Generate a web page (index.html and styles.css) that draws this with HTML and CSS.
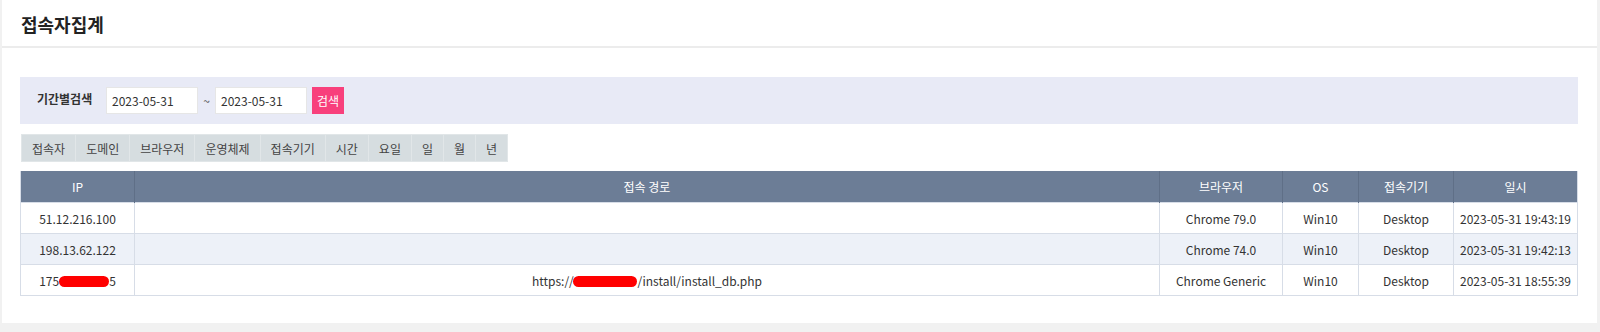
FILE: index.html
```html
<!DOCTYPE html>
<html>
<head>
    <title>접속자집계</title>
    <link rel="stylesheet" href="styles.css">
</head>
<body>
    <div class="panel">
        <div class="panel-head">
            <h1>접속자집계</h1>
        </div>
        <div class="panel-body">
            <form class="search-box">
                <span class="search-label">기간별검색</span>
                <input type="text" class="date-input" value="2023-05-31">
                <span class="tilde">~</span>
                <input type="text" class="date-input" value="2023-05-31">
                <button type="button" class="btn-search">검색</button>
            </form>

            <ul class="tabs">
                <li>접속자</li>
                <li>도메인</li>
                <li>브라우저</li>
                <li>운영체제</li>
                <li>접속기기</li>
                <li>시간</li>
                <li>요일</li>
                <li>일</li>
                <li>월</li>
                <li>년</li>
            </ul>

            <table class="visit-table">
                <thead>
                    <tr>
                        <th class="col-ip">IP</th>
                        <th>접속 경로</th>
                        <th class="col-browser">브라우저</th>
                        <th class="col-os">OS</th>
                        <th class="col-device">접속기기</th>
                        <th class="col-date">일시</th>
                    </tr>
                </thead>
                <tbody>
                    <tr>
                        <td>51.12.216.100</td>
                        <td></td>
                        <td>Chrome 79.0</td>
                        <td>Win10</td>
                        <td>Desktop</td>
                        <td>2023-05-31 19:43:19</td>
                    </tr>
                    <tr>
                        <td>198.13.62.122</td>
                        <td></td>
                        <td>Chrome 74.0</td>
                        <td>Win10</td>
                        <td>Desktop</td>
                        <td>2023-05-31 19:42:13</td>
                    </tr>
                    <tr>
                        <td><span class="masked">175<span class="redact r-ip">.000.00.0</span>5</span></td>
                        <td><span class="masked">https://<span class="redact r-url">example.co</span>/install/install_db.php</span></td>
                        <td>Chrome Generic</td>
                        <td>Win10</td>
                        <td>Desktop</td>
                        <td>2023-05-31 18:55:39</td>
                    </tr>
                </tbody>
            </table>
        </div>
    </div>
</body>
</html>
```

FILE: styles.css
```css
html, body {
    margin: 0;
    height: 100%;
}

body {
    background-color: #f1f1f1;
    font-family: "Noto Sans CJK KR", sans-serif;
    font-size: 12px;
    color: #333;
    padding: 0 3px 9px 2px;
    box-sizing: border-box;
}

.panel {
    background-color: #fff;
    height: 100%;
}

.panel-head {
    height: 46px;
    border-bottom: 2px solid #ececec;
    padding-left: 19px;
    display: flex;
    align-items: center;
}

.panel-head h1 {
    margin: 0;
    font-size: 18px;
    font-weight: bold;
    color: #222;
    padding-top: 2px;
}

.panel-body {
    padding: 29px 19px 0 18px;
}

/* search */
.search-box {
    margin: 0;
    height: 47px;
    background-color: #e8eaf6;
    display: flex;
    align-items: center;
    padding-left: 17px;
}

.search-label {
    font-weight: bold;
    color: #333;
    width: 69px;
    margin-top: -4px;
}

.date-input {
    width: 92px;
    height: 27px;
    box-sizing: border-box;
    border: 1px solid #e6e6e6;
    background: #fff;
    padding: 0 5px;
    font-family: "Noto Sans CJK KR", sans-serif;
    font-size: 12px;
    color: #333;
    outline: none;
}

.tilde {
    width: 17px;
    text-align: center;
    color: #555;
}

.btn-search {
    margin-left: 5px;
    width: 32px;
    height: 27px;
    border: none;
    padding: 0;
    background-color: #f8407c;
    color: #fff;
    font-family: "Noto Sans CJK KR", sans-serif;
    font-size: 12px;
}

/* tabs */
.tabs {
    list-style: none;
    margin: 10px 0 0 1px;
    padding: 0;
    display: flex;
    height: 26px;
    border: 1px solid #e1e6e8;
    border-right: none;
    width: max-content;
}

.tabs li {
    background-color: #d6dde0;
    border-right: 1px solid #e1e6e8;
    color: #444;
    display: flex;
    align-items: center;
    padding: 0 10px;
}

/* table */
.visit-table {
    margin-top: 9px;
    width: 100%;
    border-collapse: collapse;
    text-align: center;
}

.visit-table th {
    background-color: #6c7d96;
    color: #fff;
    font-weight: normal;
    height: 31px;
    padding: 0;
    border: 1px solid #d7dde7;
    border-top: none;
    border-left-color: #5f6f87;
    border-right-color: #5f6f87;
    border-bottom: none;
}

.visit-table th:first-child {
    border-left-color: #d7dde7;
}

.visit-table th:last-child {
    border-right-color: #d7dde7;
}

.visit-table td {
    height: 30px;
    padding: 0;
    border: 1px solid #d7dde7;
    color: #333;
}

.visit-table tbody tr:nth-child(even) {
    background-color: #edf1f8;
}

.col-ip { width: 113px; }
.col-browser { width: 122px; }
.col-os { width: 75px; }
.col-device { width: 94px; }
.col-date { width: 123px; }

/* redacted parts */
.masked {
    position: relative;
}

.redact {
    color: transparent;
    position: relative;
}

.redact::after {
    content: "";
    position: absolute;
    left: 0;
    right: 0;
    top: 4px;
    height: 11px;
    background-color: #ff0000;
    border-radius: 6px;
}
```
